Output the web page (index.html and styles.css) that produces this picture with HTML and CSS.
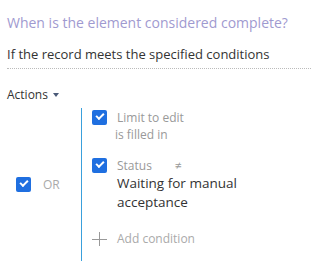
FILE: index.html
```html
<!DOCTYPE html>
<html lang="en">
<head>
  <meta charset="UTF-8" />
  <title>Element completion</title>
  <link rel="stylesheet" href="styles.css">
</head>
<body>
  <h2 class="title">When is the element considered complete?</h2>
  <div class="field">If the record meets the specified conditions</div>

  <div class="actions">Actions <span class="caret"></span></div>

  <div class="group">
    <div class="group-head">
      <span class="check"></span>
      <span class="op">OR</span>
    </div>
    <div class="group-body">
      <div class="cond">
        <span class="check"></span>
        <div class="cond-text">
          <div class="cond-name">Limit to edit</div>
          <div class="cond-rule">is filled in</div>
        </div>
      </div>
      <div class="cond">
        <span class="check"></span>
        <div class="cond-text">
          <div class="cond-name">Status <span class="cmp">&ne;</span></div>
          <div class="cond-value">Waiting for manual<br>acceptance</div>
        </div>
      </div>
      <div class="add">
        <span class="plus"></span>
        <span>Add condition</span>
      </div>
    </div>
  </div>
</body>
</html>
```

FILE: styles.css
```css
body {
  margin: 0;
  padding: 13px 10px 0 7px;
  font-family: "Open Sans", "DejaVu Sans", sans-serif;
  color: #333;
  background: #fff;
}

.title {
  margin: 0;
  font-size: 14px;
  line-height: 20px;
  font-weight: normal;
  color: #9f9ad0;
}

.field {
  margin-top: 12px;
  padding-bottom: 5px;
  font-size: 13px;
  line-height: 18px;
  border-bottom: 1px dotted #bbb;
}

.actions {
  margin-top: 18px;
  font-size: 12px;
  line-height: 16px;
}
.caret {
  display: inline-block;
  margin-left: 2px;
  vertical-align: 2px;
  border-left: 3px solid transparent;
  border-right: 3px solid transparent;
  border-top: 4px solid #4a5a78;
}

.group {
  display: flex;
  margin-top: 5px;
  font-size: 12px;
}
.group-head {
  display: flex;
  align-items: center;
  gap: 12px;
  width: 74px;
  padding-left: 9px;
  box-sizing: border-box;
}
.op {
  color: #aaa;
}
.group-body {
  border-left: 1px solid #3aa0dc;
  padding: 1px 0 14px 10px;
}

.check {
  position: relative;
  display: inline-block;
  width: 15px;
  height: 15px;
  border-radius: 2px;
  background: #1f6fe0;
  flex: none;
}
.check::after {
  content: "";
  position: absolute;
  left: 4px;
  top: 3px;
  width: 6px;
  height: 3px;
  border-left: 2px solid #fff;
  border-bottom: 2px solid #fff;
  transform: rotate(-45deg);
}

.cond {
  display: flex;
  gap: 10px;
  line-height: 17px;
}
.cond .check {
  margin-top: 1px;
}
.cond + .cond {
  margin-top: 14px;
}
.cond-name,
.cond-rule {
  color: #999;
}
.cond-rule {
  margin-left: -2px;
}
.cmp {
  margin-left: 20px;
}
.cond-value {
  font-size: 13.5px;
  line-height: 19px;
  color: #333;
}

.add {
  display: flex;
  align-items: center;
  gap: 10px;
  margin-top: 18px;
  color: #aaa;
}
.plus {
  position: relative;
  width: 15px;
  height: 14px;
}
.plus::before,
.plus::after {
  content: "";
  position: absolute;
  background: #999;
}
.plus::before {
  left: 0;
  right: 0;
  top: 7px;
  height: 1px;
}
.plus::after {
  top: 0;
  bottom: 0;
  left: 7px;
  width: 1px;
}
```
